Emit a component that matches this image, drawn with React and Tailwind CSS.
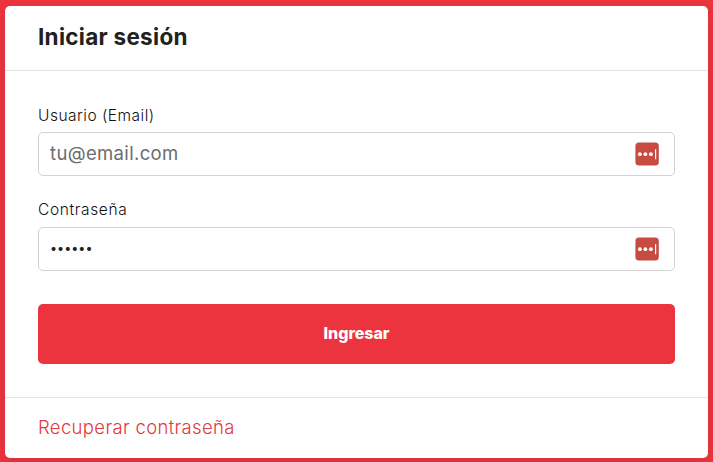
const PasswordManagerIcon = () => (
  <svg viewBox="0 0 24 24" className="h-6 w-6 shrink-0" aria-hidden="true">
    <rect x="0.4" y="0.4" width="23.4" height="23.2" rx="3.6" fill="#c74b41" />
    <circle cx="4.9" cy="12.2" r="1.9" fill="#fff" />
    <circle cx="10.4" cy="12.2" r="1.9" fill="#fff" />
    <circle cx="15.9" cy="12.2" r="1.9" fill="#fff" />
    <rect x="20" y="7.2" width="1.2" height="10" fill="#fff" />
  </svg>
)

const Field = ({ id, label, labelClass, inputClass, className, ...props }) => (
  <div className={className}>
    <label htmlFor={id} className={`block h-6 text-[15.5px] leading-6 font-[350] whitespace-nowrap text-[#111] ${labelClass}`}>{label}</label>
    <div className="mt-1 flex h-11 items-center rounded-[5px] border border-[#d2d2d2] bg-white pr-[15px] pl-[11px]">
      <input id={id} className={`h-full min-w-0 flex-1 bg-transparent outline-none placeholder:text-[#6c6c6c] ${inputClass}`} {...props} />
      <PasswordManagerIcon />
    </div>
  </div>
)

export default function App() {
  return (
    <main className="h-[462px] w-full bg-[#eb343e] px-[5px] pt-1.5 pb-1 font-['Inter',sans-serif]">
      <form className="flex h-full flex-col overflow-hidden rounded-[5px] bg-white shadow-[0_4px_12px_rgba(0,0,0,0.075)]" onSubmit={(e) => e.preventDefault()}>
        <header className="flex h-[65px] shrink-0 items-center border-b border-[#e4e4e4] px-[33px] pb-0.5">
          <h1 className="text-[22.5px] leading-8 font-bold tracking-[0.28px] text-[#212121]">Iniciar sesión</h1>
        </header>

        <div className="flex flex-1 flex-col px-[33px] pt-[33px]">
          <Field id="email" label="Usuario (Email)" labelClass="tracking-[0.5px]" inputClass="pb-0.5 text-[18.5px] tracking-[0.35px]" type="email" placeholder="tu@email.com" />
          <Field id="password" label="Contraseña" labelClass="-mt-px mb-[5px] tracking-[0.65px]" inputClass="pb-0.5 text-[12.6px] text-[#212121]" className="mt-[23px]" type="password" defaultValue="123456" />
          <button type="submit" className="mt-[33px] h-[60px] rounded-[5px] bg-[#eb343e] pb-0.5 text-base font-extrabold text-white">Ingresar</button>
        </div>

        <footer className="flex h-[61px] shrink-0 items-center border-t border-[#e4e4e4] px-[33px]">
          <a href="#" className="text-[18.5px] font-light tracking-[0.35px] text-[#e43740]">Recuperar contraseña</a>
        </footer>
      </form>
    </main>
  )
}
